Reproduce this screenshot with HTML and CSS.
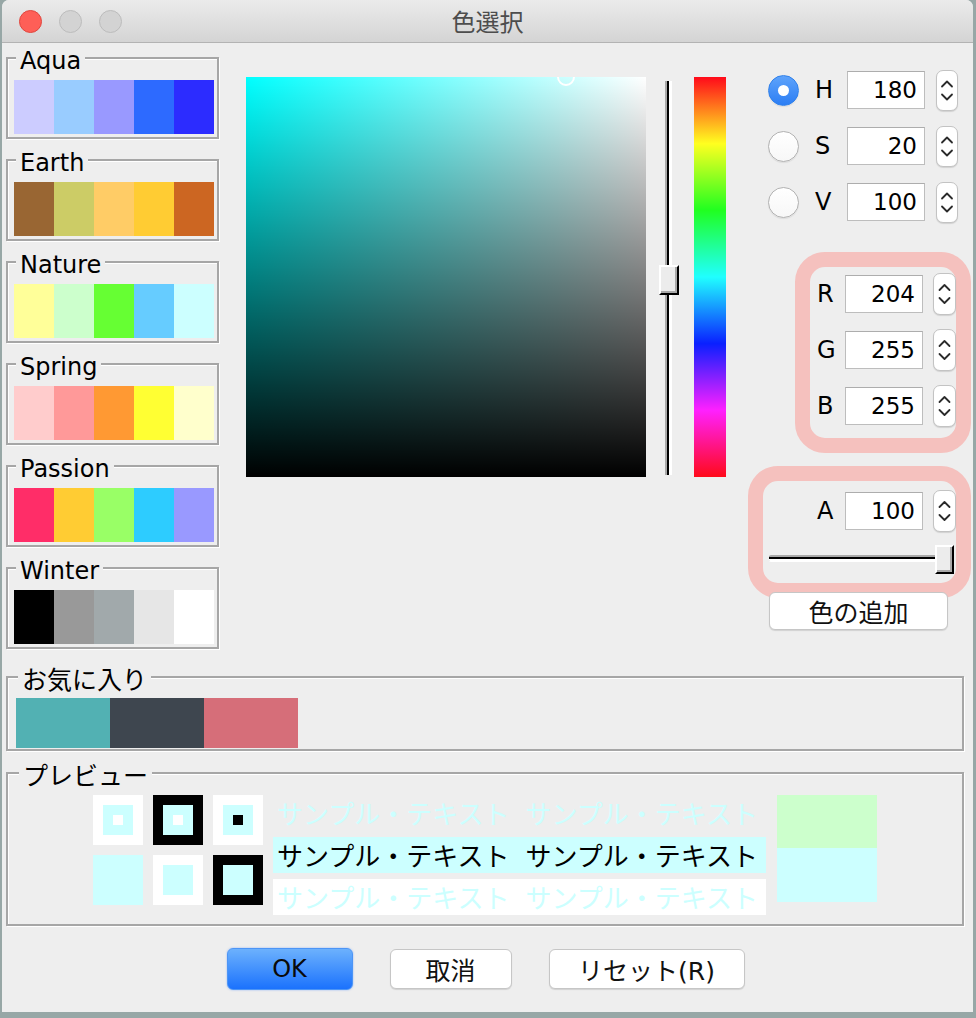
FILE: index.html
```html
<!DOCTYPE html>
<html lang="ja">
<head>
<meta charset="utf-8">
<title>色選択</title>
<link rel="stylesheet" href="styles.css">
</head>
<body>
<div class="window">
  <div class="titlebar">
    <div class="lights"><span class="light close"></span><span class="light"></span><span class="light"></span></div>
    <div class="title">色選択</div>
    <div></div>
  </div>
  <div class="content">
    <div class="main">
      <div class="palettes">
        <div class="group pal">
          <div class="gtitle">Aqua</div>
          <div class="swatches"><span style="background:#ccccff"></span><span style="background:#99ccff"></span><span style="background:#9999ff"></span><span style="background:#2d6aff"></span><span style="background:#2c2cff"></span></div>
        </div>
        <div class="group pal">
          <div class="gtitle">Earth</div>
          <div class="swatches"><span style="background:#996633"></span><span style="background:#cccc66"></span><span style="background:#ffcc66"></span><span style="background:#ffcc33"></span><span style="background:#cc6622"></span></div>
        </div>
        <div class="group pal">
          <div class="gtitle">Nature</div>
          <div class="swatches"><span style="background:#ffff99"></span><span style="background:#ccffcc"></span><span style="background:#66ff33"></span><span style="background:#66ccff"></span><span style="background:#ccffff"></span></div>
        </div>
        <div class="group pal">
          <div class="gtitle">Spring</div>
          <div class="swatches"><span style="background:#ffcccc"></span><span style="background:#ff9999"></span><span style="background:#ff9933"></span><span style="background:#ffff33"></span><span style="background:#ffffcc"></span></div>
        </div>
        <div class="group pal">
          <div class="gtitle">Passion</div>
          <div class="swatches"><span style="background:#ff2d68"></span><span style="background:#ffcc33"></span><span style="background:#99ff66"></span><span style="background:#2dccff"></span><span style="background:#9999ff"></span></div>
        </div>
        <div class="group pal">
          <div class="gtitle">Winter</div>
          <div class="swatches"><span style="background:#000000"></span><span style="background:#999999"></span><span style="background:#a1a9ab"></span><span style="background:#e6e6e6"></span><span style="background:#ffffff"></span></div>
        </div>
      </div>

      <div class="picker">
        <div class="sv"><span class="marker"></span></div>
        <div class="vslider"><div class="vtrack"></div><div class="vthumb"></div></div>
        <div class="hue"></div>
      </div>

      <div class="controls">
        <div class="hsv">
          <div class="hrow">
            <span class="radio on"></span><span class="lbl">H</span><div class="field">180</div>
            <div class="spin"><svg viewBox="0 0 20 39"><path d="M5 15.5 10 10.5 15 15.5M5 23.5 10 28.5 15 23.5"/></svg></div>
          </div>
          <div class="hrow">
            <span class="radio"></span><span class="lbl">S</span><div class="field">20</div>
            <div class="spin"><svg viewBox="0 0 20 39"><path d="M5 15.5 10 10.5 15 15.5M5 23.5 10 28.5 15 23.5"/></svg></div>
          </div>
          <div class="hrow">
            <span class="radio"></span><span class="lbl">V</span><div class="field">100</div>
            <div class="spin"><svg viewBox="0 0 20 39"><path d="M5 15.5 10 10.5 15 15.5M5 23.5 10 28.5 15 23.5"/></svg></div>
          </div>
        </div>

        <div class="rgb">
          <div class="crow">
            <span class="lbl">R</span><div class="field">204</div>
            <div class="spin"><svg viewBox="0 0 21 40"><path d="M5.5 16 10.5 11 15.5 16M5.5 24 10.5 29 15.5 24"/></svg></div>
          </div>
          <div class="crow">
            <span class="lbl">G</span><div class="field">255</div>
            <div class="spin"><svg viewBox="0 0 21 40"><path d="M5.5 16 10.5 11 15.5 16M5.5 24 10.5 29 15.5 24"/></svg></div>
          </div>
          <div class="crow">
            <span class="lbl">B</span><div class="field">255</div>
            <div class="spin"><svg viewBox="0 0 21 40"><path d="M5.5 16 10.5 11 15.5 16M5.5 24 10.5 29 15.5 24"/></svg></div>
          </div>
        </div>

        <div class="alpha">
          <div class="crow">
            <span class="lbl">A</span><div class="field">100</div>
            <div class="spin"><svg viewBox="0 0 21 40"><path d="M5.5 16 10.5 11 15.5 16M5.5 24 10.5 29 15.5 24"/></svg></div>
          </div>
          <div class="hslider"><div class="htrack"></div><div class="hthumb"></div></div>
        </div>

        <button class="btn addbtn">色の追加</button>
      </div>
    </div>

    <div class="group wide fav">
      <div class="jtitle">お気に入り</div>
      <div class="favsw"><span style="background:#52b1b3"></span><span style="background:#3e464f"></span><span style="background:#d66e79"></span></div>
    </div>

    <div class="group wide preview">
      <div class="jtitle">プレビュー</div>
      <div class="pvbody">
        <div class="squares">
          <div class="sq w"><div class="mid"><div class="dot w"></div></div></div>
          <div class="sq k"><div class="mid"><div class="dot w"></div></div></div>
          <div class="sq w"><div class="mid"><div class="dot k"></div></div></div>
          <div class="sq c"></div>
          <div class="sq w"><div class="mid"></div></div>
          <div class="sq k"><div class="mid"></div></div>
        </div>
        <div class="samples">
          <div class="srow t1"><span>サンプル・テキスト</span><span>サンプル・テキスト</span></div>
          <div class="srow t2"><span>サンプル・テキスト</span><span>サンプル・テキスト</span></div>
          <div class="srow t3"><span>サンプル・テキスト</span><span>サンプル・テキスト</span></div>
        </div>
        <div class="pvswatch"><div class="old"></div><div class="new"></div></div>
      </div>
    </div>

    <div class="buttons">
      <button class="btn ok">OK</button>
      <button class="btn cancel">取消</button>
      <button class="btn reset">リセット(R)</button>
    </div>
  </div>
</div>
</body>
</html>
```

FILE: styles.css
```css
* { box-sizing: border-box; }
html, body { margin: 0; padding: 0; }
body {
  width: 976px;
  height: 1018px;
  overflow: hidden;
  background: #97a7a6;
  font-family: "DejaVu Sans", "Noto Sans CJK JP", sans-serif;
  color: #000;
}
.window {
  margin-left: 2px;
  width: 971px;
  height: 1012px;
  background: #eeeeee;
  border-radius: 7px 7px 0 0;
  overflow: hidden;
}
.titlebar {
  height: 43px;
  display: grid;
  grid-template-columns: 1fr auto 1fr;
  align-items: center;
  background: linear-gradient(#ebebeb, #d4d4d4);
  border-bottom: 1px solid #b3b3b3;
}
.lights { display: flex; gap: 17px; padding-left: 17px; }
.light {
  width: 23px; height: 23px; border-radius: 50%;
  background: #d3d3d3; border: 1px solid #bcbcbc;
}
.light.close { background: #fe5f57; border-color: #e0463e; }
.title {
  font-family: "Noto Sans CJK JP", sans-serif;
  font-size: 24px;
  color: #4d4d4d;
  line-height: 30px;
}
.content { padding: 14px 0 0 4px; }
.main { display: flex; align-items: flex-start; }
.main > * { flex-shrink: 0; }

/* etched group boxes */
.group {
  border: 2px solid #a6a6a6;
  box-shadow: 1px 1px 0 #fff, inset 1px 1px 0 #fff;
  display: flex;
  flex-direction: column;
  align-items: flex-start;
}
.palettes { width: 214px; display: flex; flex-direction: column; gap: 20px; }
.pal { width: 213px; padding: 0 3px 3px 6px; }
.gtitle {
  margin: -10px 0 0 2px;
  padding: 0 4px;
  height: 24px;
  font-size: 24px;
  line-height: 24px;
  background: #eeeeee;
}
.swatches { display: flex; margin-top: 7px; }
.swatches span { width: 40px; height: 54px; }

/* picker */
.picker { margin-left: 26px; padding-top: 20px; display: flex; align-items: flex-start; }
.sv {
  position: relative;
  width: 400px; height: 400px;
  overflow: hidden;
  background: linear-gradient(to bottom, rgba(0,0,0,0), #000), linear-gradient(to right, #00ffff, #ffffff);
}
.marker {
  position: absolute;
  left: 311px; top: -9px;
  width: 18px; height: 18px;
  border: 2px solid #fff;
  border-radius: 50%;
}
.vslider { position: relative; margin: 4px 0 0 13px; width: 20px; height: 394px; }
.vtrack {
  margin-left: 6px;
  width: 7px; height: 100%;
  background: #000;
  border-left: 2px solid #a9a9a9;
  border-right: 3px solid #fff;
}
.vthumb {
  position: absolute; left: 0; top: 184px;
  width: 20px; height: 30px;
  background: #ececec;
  border-top: 2px solid #fff; border-left: 2px solid #fff;
  border-right: 2px solid #000; border-bottom: 2px solid #000;
  box-shadow: inset -2px -2px 0 #a9a9a9;
}
.hue {
  margin-left: 15px;
  width: 32px; height: 400px;
  background: linear-gradient(#ff0a1a, #ffff20, #20ff20, #20ffff, #0a20ff, #ff20ff, #ff0a1a);
}

/* controls */
.controls {
  margin-left: 22px;
  width: 225px;
  padding-top: 12px;
  display: flex;
  flex-direction: column;
  align-items: flex-start;
}
.hsv { display: flex; flex-direction: column; gap: 14px; }
.hrow, .crow { display: flex; align-items: center; height: 42px; }
.radio {
  margin-left: 20px;
  width: 31px; height: 31px;
  border-radius: 50%;
  background: linear-gradient(#ffffff, #f7f7f7);
  border: 1px solid #b2b2b2;
  box-shadow: 0 1px 1px rgba(0,0,0,0.08);
  display: flex; align-items: center; justify-content: center;
}
.radio.on { background: linear-gradient(#5ea3fb, #2c7ef4); border-color: #3181ea; }
.radio.on::after { content: ""; width: 11px; height: 11px; border-radius: 50%; background: #fff; }
.lbl { font-size: 24px; line-height: 28px; }
.hrow .lbl { margin-left: 16px; width: 32px; }
.field {
  width: 78px; height: 38px;
  background: #fff;
  border: 1px solid #bdbdbd;
  border-top-color: #adadad;
  text-align: right;
  padding-right: 7px;
  font-size: 23px;
  line-height: 36px;
}
.spin {
  width: 22px; height: 41px;
  border: 1px solid #c3c3c3;
  border-radius: 7px;
  background: #fff;
  box-shadow: 0 1px 1px rgba(0,0,0,0.12);
  display: flex;
}
.spin svg { width: 100%; height: 100%; fill: none; stroke: #2b2b2b; stroke-width: 1.8; stroke-linecap: round; stroke-linejoin: round; }
.hrow .spin { margin-left: 11px; }
.crow .lbl { width: 28px; }
.crow .spin { margin-left: 10px; width: 23px; height: 42px; }

.rgb {
  margin: 29px 0 0 47px;
  width: 176px;
  border: 15px solid #f5c1be;
  border-radius: 30px;
  padding: 6px 0 11px 7px;
  display: flex; flex-direction: column; gap: 14px;
}
.alpha {
  margin-top: 13px;
  width: 223px;
  border: 15px solid #f5c1be;
  border-radius: 30px;
  padding: 9px 0 8px 6px;
}
.alpha .crow { justify-content: flex-end; }
.hslider { position: relative; margin-top: 13px; width: 185px; height: 30px; padding-top: 10px; }
.htrack {
  width: 184px; height: 7px;
  background: #000;
  border-top: 2px solid #a9a9a9;
  border-bottom: 3px solid #fff;
  border-radius: 2px 0 0 2px;
}
.hthumb {
  position: absolute; right: 0; top: 0;
  width: 19px; height: 29px;
  background: #ececec;
  border-top: 2px solid #fff; border-left: 2px solid #fff;
  border-right: 2px solid #000; border-bottom: 2px solid #000;
  box-shadow: inset -2px -2px 0 #a9a9a9;
}

.btn {
  font-family: "DejaVu Sans", "Noto Sans CJK JP", sans-serif;
  font-size: 25px;
  color: #111;
  background: #fff;
  border: 1px solid #c6c6c6;
  border-radius: 6px;
  box-shadow: 0 1px 1px rgba(0,0,0,0.12);
  padding: 0;
  margin: 0;
  display: flex; align-items: center; justify-content: center;
}
.addbtn { margin: -6px 0 0 21px; width: 179px; height: 38px; }

/* favorites */
.wide { width: 958px; }
.jtitle {
  font-family: "Noto Sans CJK JP", sans-serif;
  font-size: 25px;
  line-height: 28px;
  height: 28px;
  margin: -14px 0 0 2px;
  padding: 0 4px;
  background: #eeeeee;
}
.fav { margin-top: 27px; padding: 0 8px 1px 8px; }
.favsw { display: flex; margin-top: 6px; }
.favsw span { width: 94px; height: 50px; }

/* preview */
.preview { margin-top: 21px; padding: 0 8px 9px 8px; }
.preview .jtitle { margin-left: 3px; }
.pvbody {
  align-self: stretch;
  margin-top: 7px;
  display: flex;
  justify-content: center;
  align-items: flex-start;
}
.squares { display: grid; grid-template-columns: repeat(3, 50px); grid-auto-rows: 50px; gap: 10px; }
.sq { width: 50px; height: 50px; padding: 10px; }
.sq.w { background: #fff; }
.sq.k { background: #000; }
.sq.c { background: #ccffff; }
.mid { width: 30px; height: 30px; padding: 10px; background: #ccffff; }
.dot { width: 10px; height: 10px; }
.dot.w { background: #fff; }
.dot.k { background: #000; }
.samples { margin-left: 10px; width: 493px; display: flex; flex-direction: column; gap: 6px; }
.srow {
  display: flex;
  gap: 16px;
  height: 36px;
  line-height: 36px;
  padding-left: 4px;
  font-family: "Noto Sans CJK JP", sans-serif;
  font-size: 26px;
  white-space: nowrap;
}
.t1 { color: #ccffff; }
.t2 { background: #ccffff; color: #000; }
.t3 { background: #fff; color: #ccffff; }
.pvswatch { margin-left: 11px; width: 100px; }
.pvswatch .old { height: 53px; background: #ccffcc; }
.pvswatch .new { height: 54px; background: #ccffff; }

/* bottom buttons */
.buttons {
  margin-top: 22px;
  padding-right: 8px;
  display: flex;
  justify-content: center;
  align-items: center;
  gap: 37px;
}
.ok {
  width: 126px; height: 42px;
  font-size: 24px;
  background: linear-gradient(#6cb1fd, #1b72fd);
  border-color: #4c95f6;
  box-shadow: 0 0 2px rgba(40,120,255,0.5);
  color: #0a0a0a;
}
.cancel { width: 122px; height: 40px; }
.reset { width: 196px; height: 40px; }
```
